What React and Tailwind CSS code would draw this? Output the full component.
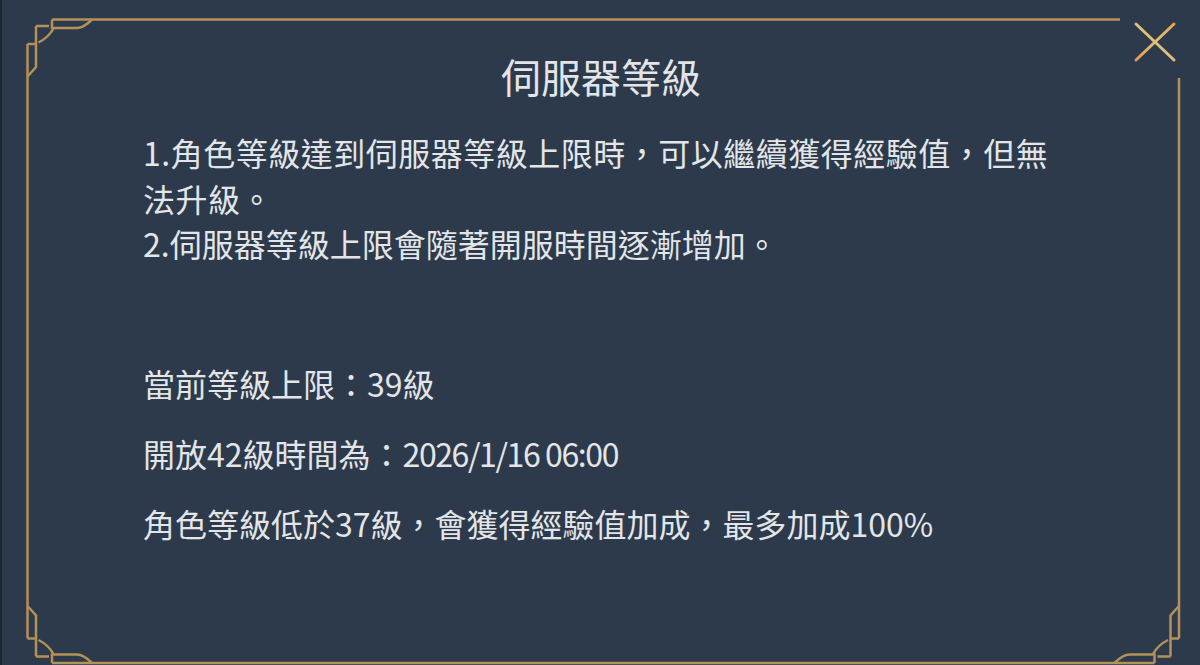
import React from "react";

const GOLD = "#b39159";

// one corner ornament, drawn with the corner at 0,0 and opened towards +x/+y
const CornerOrnament = ({ transform }) => {
  return (
    <g transform={transform}>
      <path d="M 24.5 0 V 8.5 H 49.5 Q 56 8.5 64.5 0" />
      <path d="M 26 9 Q 21 18 11 23" />
      <path d="M 8.5 6.5 H 21.5" />
      <path d="M 8.5 6.5 V 47.5 L 0.5 56.5" />
      <path d="M 0 24.5 H 8.5" />
    </g>
  );
};

const Frame = () => {
  return (
    <svg
      className="absolute inset-0 pointer-events-none"
      width="1200"
      height="665"
      viewBox="0 0 1200 665"
      fill="none"
      stroke={GOLD}
      strokeWidth="2.5"
    >
      <path d="M 50 19.5 H 1118" />
      <path d="M 25.5 44 V 638.5" />
      <path d="M 1177 78 V 638.5" />
      <path d="M 50 663 H 1152.5" />
      <CornerOrnament transform="translate(25.5 19.5)" />
      <CornerOrnament transform="translate(25.5 663) scale(1 -1)" />
      <CornerOrnament transform="translate(1177 663) scale(-1 -1)" />
    </svg>
  );
};

const CloseButton = () => {
  return (
    <button
      type="button"
      className="absolute top-[20px] right-[22px] w-[46px] h-[46px] flex items-center justify-center"
    >
      <svg width="46" height="46" viewBox="0 0 46 46" fill="none">
        <defs>
          <linearGradient id="xGold" x1="0" y1="1" x2="1" y2="0">
            <stop offset="0" stopColor="#e59a4c" />
            <stop offset="0.5" stopColor="#dcc07c" />
            <stop offset="1" stopColor="#e8a653" />
          </linearGradient>
        </defs>
        <path
          d="M 4 4 L 42 40 M 42 4 L 4 40"
          stroke="url(#xGold)"
          strokeWidth="3"
          strokeLinecap="round"
        />
      </svg>
    </button>
  );
};

const App = () => {
  return (
    <div
      className="relative w-full h-[665px] overflow-hidden bg-[#2c3a4b] border-l-2 border-[#1c2631] text-[#e3e5e8]"
      style={{ fontFamily: '"Noto Sans CJK TC", "Noto Sans", sans-serif' }}
    >
      <Frame />
      <CloseButton />

      <div className="flex flex-col pt-[46px]">
        <h1 className="text-center text-[40px] leading-[60px] font-normal">
          伺服器等級
        </h1>

        <div className="pl-[141px] mt-[24px]">
          <p className="w-[925px] text-[32px] leading-[45.5px] tracking-[0.5px]">
            1.角色等級達到伺服器等級上限時，可以繼續獲得經驗值，但無法升級。
          </p>
          <p className="w-[925px] text-[32px] leading-[45.5px]">
            2.伺服器等級上限會隨著開服時間逐漸增加。
          </p>

          <div className="flex flex-col gap-[30px] mt-[96px] text-[32px] leading-[40px]">
            <p>當前等級上限：39級</p>
            <p>
              開放42級時間為：
              <span className="tracking-[-1.4px]">2026/1/16 06:00</span>
            </p>
            <p>角色等級低於37級，會獲得經驗值加成，最多加成100%</p>
          </div>
        </div>
      </div>
    </div>
  );
};

export default App;
